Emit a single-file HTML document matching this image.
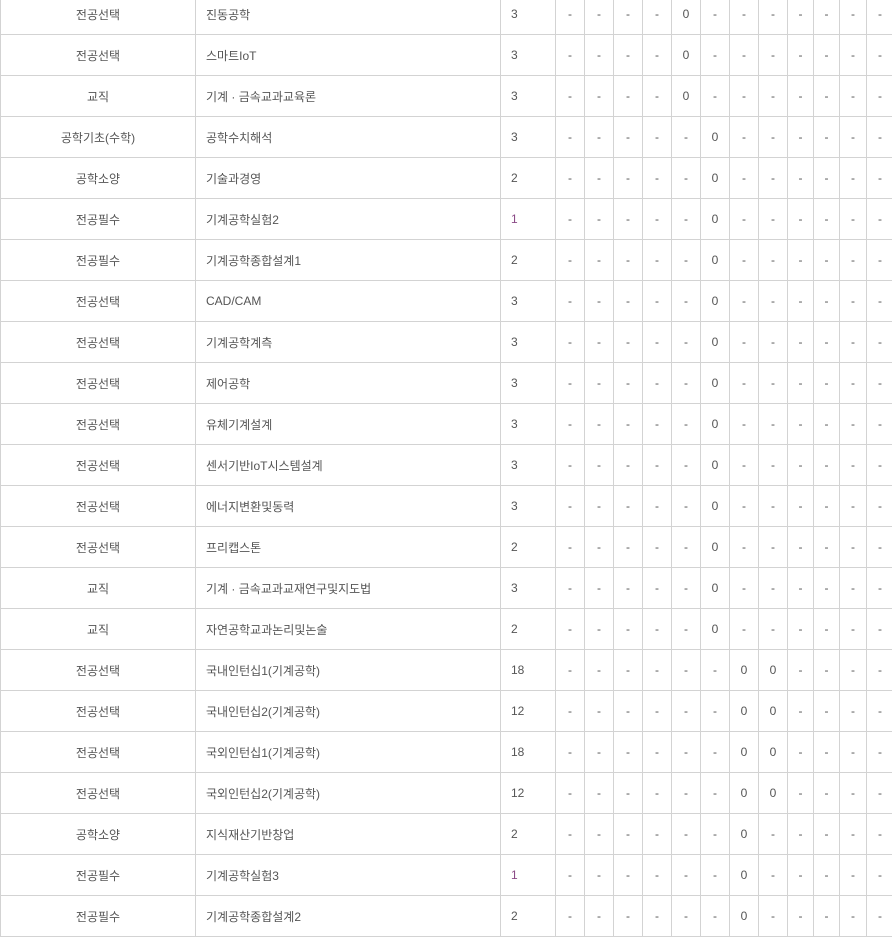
<!DOCTYPE html>
<html><head><meta charset="utf-8"><style>
html,body{margin:0;padding:0;background:#fff;width:892px;height:939px;overflow:hidden;position:relative}
table{position:absolute;left:0;top:-7px;border-collapse:collapse;table-layout:fixed;width:893px;font-family:"Liberation Sans","Noto Sans CJK KR",sans-serif;font-size:12px;color:#555}
td{border:1px solid #d3d3d3;height:40px;padding:0;text-align:center;white-space:nowrap;overflow:hidden}
td.c{text-align:left;padding-left:10px}
</style></head><body>
<table>
<colgroup><col style="width:195px"><col style="width:305px"><col style="width:55px"><col style="width:29px"><col style="width:29px"><col style="width:29px"><col style="width:29px"><col style="width:29px"><col style="width:29px"><col style="width:29px"><col style="width:29px"><col style="width:26px"><col style="width:26px"><col style="width:27px"><col style="width:27px"></colgroup>
<tbody id="b"></tbody>
</table>
<script>
var d=[["전공선택","진동공학","3",[4]],["전공선택","스마트IoT","3",[4]],["교직","기계 · 금속교과교육론","3",[4]],["공학기초(수학)","공학수치해석","3",[5]],["공학소양","기술과경영","2",[5]],["전공필수","기계공학실험2","1",[5]],["전공필수","기계공학종합설계1","2",[5]],["전공선택","CAD/CAM","3",[5]],["전공선택","기계공학계측","3",[5]],["전공선택","제어공학","3",[5]],["전공선택","유체기계설계","3",[5]],["전공선택","센서기반IoT시스템설계","3",[5]],["전공선택","에너지변환및동력","3",[5]],["전공선택","프리캡스톤","2",[5]],["교직","기계 · 금속교과교재연구및지도법","3",[5]],["교직","자연공학교과논리및논술","2",[5]],["전공선택","국내인턴십1(기계공학)","18",[6,7]],["전공선택","국내인턴십2(기계공학)","12",[6,7]],["전공선택","국외인턴십1(기계공학)","18",[6,7]],["전공선택","국외인턴십2(기계공학)","12",[6,7]],["공학소양","지식재산기반창업","2",[6]],["전공필수","기계공학실험3","1",[6]],["전공필수","기계공학종합설계2","2",[6]]];
var h="";
d.forEach(function(r){h+="<tr><td>"+r[0]+"</td><td style='text-align:left;padding-left:10px'>"+r[1]+"</td><td class='c'"+(r[2]=="1"?" style='color:#8a4a86'":"")+">"+r[2]+"</td>";for(var i=0;i<12;i++)h+="<td>"+(r[3].indexOf(i)>=0?"0":"-")+"</td>";h+="</tr>";});
document.getElementById("b").innerHTML=h;
</script>
</body></html>
